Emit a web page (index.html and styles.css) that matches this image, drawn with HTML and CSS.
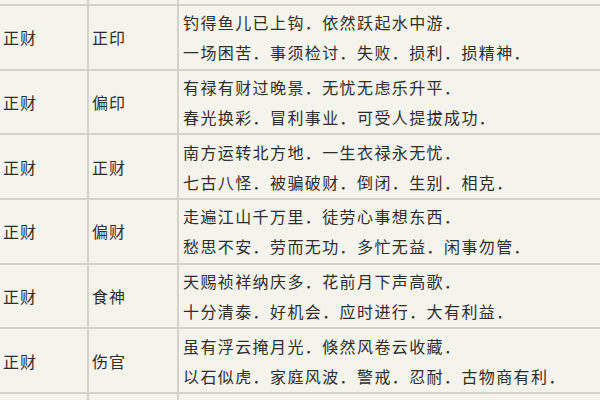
FILE: index.html
```html
<!DOCTYPE html>
<html lang="zh">
<head>
<meta charset="utf-8">
<link rel="stylesheet" href="styles.css">
</head>
<body>
<div class="grid">
  <div class="cell"></div><div class="cell"></div><div class="cell"></div>

  <div class="cell c1">正财</div><div class="cell c2">正印</div>
  <div class="cell c3"><p>钓得鱼儿已上钩．依然跃起水中游．</p><p>一场困苦．事须检讨．失败．损利．损精神．</p></div>

  <div class="cell c1">正财</div><div class="cell c2">偏印</div>
  <div class="cell c3"><p>有禄有财过晚景．无忧无虑乐升平．</p><p>春光换彩．冒利事业．可受人提拔成功．</p></div>

  <div class="cell c1">正财</div><div class="cell c2">正财</div>
  <div class="cell c3"><p>南方运转北方地．一生衣禄永无忧．</p><p>七古八怪．被骗破财．倒闭．生别．相克．</p></div>

  <div class="cell c1">正财</div><div class="cell c2">偏财</div>
  <div class="cell c3"><p>走遍江山千万里．徒劳心事想东西．</p><p>愁思不安．劳而无功．多忙无益．闲事勿管．</p></div>

  <div class="cell c1">正财</div><div class="cell c2">食神</div>
  <div class="cell c3"><p>天赐祯祥纳庆多．花前月下声高歌．</p><p>十分清泰．好机会．应时进行．大有利益．</p></div>

  <div class="cell c1">正财</div><div class="cell c2">伤官</div>
  <div class="cell c3"><p>虽有浮云掩月光．倏然风卷云收藏．</p><p>以石似虎．家庭风波．警戒．忍耐．古物商有利．</p></div>

  <div class="cell c1"></div><div class="cell c2"></div><div class="cell c3"></div>
</div>
</body>
</html>
```
FILE: styles.css
```css
html, body {
  margin: 0;
  padding: 0;
  background: #f4f3ec;
  overflow: hidden;
}
body {
  width: 600px;
  height: 400px;
  font-family: "Noto Sans CJK SC", "Noto Sans", sans-serif;
  font-size: 16px;
  color: #2e2e2e;
}
.grid {
  display: grid;
  grid-template-columns: 87px 88px 1fr;
  grid-template-rows: 4px repeat(6, 62.67px) 6px;
  gap: 2px;
  background: #d3d3cd;
  width: 600px;
  height: 400px;
}
.cell {
  background: #f4f3ec;
  display: flex;
  flex-direction: column;
  justify-content: center;
  overflow: hidden;
  white-space: nowrap;
}
.c1 {
  padding-left: 3px;
  letter-spacing: 1px;
}
.c2 {
  padding-left: 3px;
  letter-spacing: 1px;
}
.c3 {
  padding-left: 4px;
  letter-spacing: 1.4px;
}
.c3 p {
  margin: 0;
  line-height: 30px;
}
```
